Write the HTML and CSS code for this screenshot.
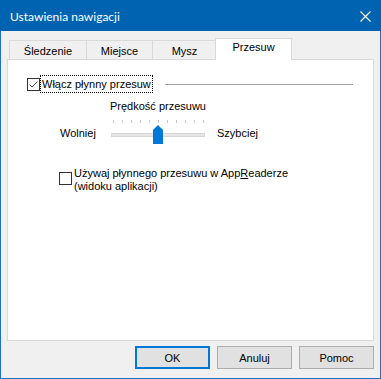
FILE: index.html
```html
<!DOCTYPE html>
<html lang="pl">
<head>
<meta charset="utf-8">
<title>Ustawienia nawigacji</title>
<link rel="stylesheet" href="styles.css">
</head>
<body>
<div class="window">
  <div class="titlebar">
    <span class="title">Ustawienia nawigacji</span>
    <svg class="close" width="11" height="11" viewBox="0 0 11 11"><path d="M0.5 0.5 L10.5 10.5 M10.5 0.5 L0.5 10.5" stroke="#fff" stroke-width="1.1" fill="none"/></svg>
  </div>
  <div class="client">
    <div class="tabs">
      <div class="tab t1">Śledzenie</div>
      <div class="tab t2">Miejsce</div>
      <div class="tab t3">Mysz</div>
      <div class="tab t4 active">Przesuw</div>
    </div>
    <div class="panel">
      <div class="group-head">
        <span class="checkbox"><svg width="11" height="11" viewBox="0 0 11 11"><polyline points="1.5,5.5 4,8 9.5,2.5" stroke="#444" stroke-width="1" fill="none"/></svg></span>
        <span class="label focus">Włącz płynny przesuw</span>
        <span class="rule"></span>
      </div>
      <div class="speed">
        <div class="speed-title">Prędkość przesuwu</div>
        <span class="slow">Wolniej</span>
        <svg class="slider" width="100" height="30" viewBox="0 0 100 30">
          <g fill="#c9c9c9">
            <rect x="5" y="5" width="1" height="3"/><rect x="14" y="5" width="1" height="3"/><rect x="23" y="5" width="1" height="3"/><rect x="32" y="5" width="1" height="3"/><rect x="41" y="5" width="1" height="3"/><rect x="50" y="5" width="1" height="3"/><rect x="59" y="5" width="1" height="3"/><rect x="68" y="5" width="1" height="3"/><rect x="77" y="5" width="1" height="3"/><rect x="86" y="5" width="1" height="3"/><rect x="95" y="5" width="1" height="3"/>
          </g>
          <rect x="3.5" y="18.5" width="93" height="3" fill="#e7e7e7" stroke="#d6d6d6"/>
          <polygon points="45,15 50,10 55,15 55,29 45,29" fill="#0078d7"/>
        </svg>
        <span class="fast">Szybciej</span>
      </div>
      <div class="option">
        <span class="checkbox"></span>
        <span class="label">Używaj płynnego przesuwu w App<u>R</u>eaderze<br>(widoku aplikacji)</span>
      </div>
    </div>
    <div class="buttons">
      <button class="btn default">OK</button>
      <button class="btn">Anuluj</button>
      <button class="btn">Pomoc</button>
    </div>
  </div>
</div>
</body>
</html>
```
FILE: styles.css
```css
html, body {
  margin: 0;
  padding: 0;
  background: #fff;
}
.window {
  width: 381px;
  height: 379px;
  box-sizing: border-box;
  border: 1px solid #1c72c2;
  border-top: none;
  display: flex;
  flex-direction: column;
  background: #f0f0f0;
  font-family: "Liberation Sans", Arial, sans-serif;
  font-size: 11px;
  color: #000;
}
.titlebar {
  height: 31px;
  flex: none;
  background: #0063b1;
  margin: 0 -1px;
  display: flex;
  align-items: center;
  color: #fff;
}
.title {
  font-family: Lato, "Noto Sans", sans-serif;
  font-size: 12px;
  margin-left: 10px;
  margin-top: 1px;
}
.close {
  margin-left: auto;
  margin-right: 10px;
  margin-top: 1px;
}
.client {
  flex: 1;
  display: flex;
  flex-direction: column;
  padding: 7px 6px 9px 6px;
  min-height: 0;
}
.tabs {
  display: flex;
  align-items: flex-end;
  height: 22px;
  margin-left: 2px;
  flex: none;
}
.tab {
  box-sizing: border-box;
  height: 20px;
  border: 1px solid #d9d9d9;
  border-bottom: none;
  background: #f0f0f0;
  text-align: center;
  line-height: 19px;
  padding-top: 1px;
  position: relative;
}
.t1 { width: 78px; }
.t2 { width: 67px; margin-left: -1px; }
.t3 { width: 65px; margin-left: -1px; }
.t4 { width: 77px; margin-left: -2px; }
.tab.active {
  height: 22px;
  background: #fff;
  z-index: 2;
  line-height: 17px;
  padding-top: 0;
}
.panel {
  flex: 1;
  margin-top: -1px;
  border: 1px solid #d9d9d9;
  background: #fff;
  position: relative;
  z-index: 1;
  display: flex;
  flex-direction: column;
}
.group-head {
  display: flex;
  align-items: center;
  margin-top: 15px;
  height: 18px;
}
.checkbox {
  box-sizing: border-box;
  width: 13px;
  height: 13px;
  border: 1px solid #333;
  background: #fff;
  flex: none;
  display: flex;
  align-items: center;
  justify-content: center;
}
.group-head .checkbox {
  margin-left: 19px;
}
.label.focus {
  border: 1px dotted #000;
  padding: 0 1px 0 1px;
  line-height: 16px;
}
.rule {
  flex: 1;
  height: 1px;
  background: #a0a0a0;
  margin: 0 20px 0 12px;
}
.speed {
  display: grid;
  grid-template-columns: 48px 100px auto;
  margin-left: 52px;
  margin-top: 7px;
  line-height: 13px;
}
.speed-title {
  grid-column: 2;
  justify-self: center;
  white-space: nowrap;
}
.slider {
  grid-column: 2;
  grid-row: 2;
  margin-top: 2px;
  display: block;
}
.slow {
  grid-column: 1;
  grid-row: 2;
  margin-top: 14px;
}
.fast {
  grid-column: 3;
  grid-row: 2;
  margin-top: 14px;
  margin-left: 9px;
}
.option {
  display: flex;
  align-items: flex-start;
  margin-top: 22px;
  margin-left: 51px;
  line-height: 13px;
}
.option .checkbox {
  margin-top: 5px;
}
.option .label {
  margin-left: 2px;
}
.option u {
  text-decoration: underline;
}
.buttons {
  display: flex;
  justify-content: flex-end;
  gap: 7px;
  margin-top: 5px;
  flex: none;
}
.btn {
  box-sizing: border-box;
  width: 75px;
  height: 23px;
  border: 1px solid #adadad;
  background: #e1e1e1;
  font-family: "Liberation Sans", Arial, sans-serif;
  font-size: 11px;
  font-weight: normal;
  color: #000;
  padding: 0;
  margin: 0;
}
.btn.default {
  border: 2px solid #0078d7;
}
```
